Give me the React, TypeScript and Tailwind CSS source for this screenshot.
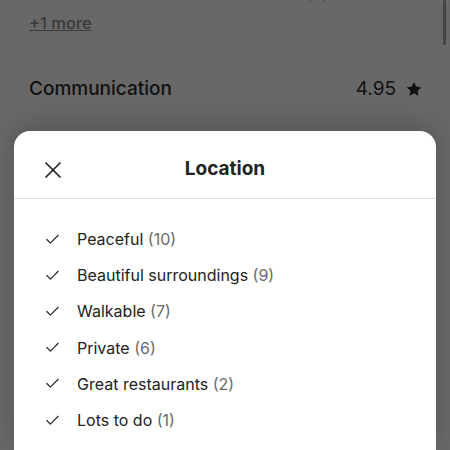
import { X, Check } from "lucide-react";

const TAGS = [
  { label: "Peaceful", count: 10 },
  { label: "Beautiful surroundings", count: 9 },
  { label: "Walkable", count: 7 },
  { label: "Private", count: 6 },
  { label: "Great restaurants", count: 2 },
  { label: "Lots to do", count: 1 },
];

function Star() {
  return (
    <svg width="14" height="14" viewBox="0 0 32 32" fill="currentColor" aria-hidden>
      <path d="M15.1 1.58l-4.13 8.88-9.86 1.27a1 1 0 0 0-.54 1.74l7.3 6.57-1.97 9.850a1 1 0 0 0 1.48 1.06l8.62-5 8.63 5a1 1 0 0 0 1.48-1.06l-1.97-9.85 7.3-6.57a1 1 0 0 0-.55-1.73l-9.86-1.28-4.12-8.88a1 1 0 0 0-1.82 0z" />
    </svg>
  );
}

export default function App() {
  return (
    <div className="relative w-[450px] h-[450px] overflow-hidden bg-[#686868] font-['Inter',sans-serif]">
      {/* page behind the sheet */}
      <div className="px-[29px]">
        <p className="-mt-[19px] pl-[20px] text-[16px] leading-6 text-[#262626]">
          Clean and comfortable bedrooms (3)
        </p>
        <button className="mt-[6px] text-[16.5px] leading-6 font-medium text-[#3a3a3a] underline">+1 more</button>
        <div className="mt-[42px] flex items-center justify-between">
          <span className="text-[19px] leading-6 font-medium text-[#111]">Communication</span>
          <span className="flex items-center gap-[11px] text-[19px] leading-6 text-[#111]">
            4.95
            <Star />
          </span>
        </div>
      </div>
      <div className="absolute right-[4px] top-0 h-[45px] w-[3px] rounded-full bg-[#444]" />

      {/* bottom sheet */}
      <div className="absolute left-[14px] right-[14px] top-[131px] bottom-0 rounded-t-[16px] bg-white shadow-[0_-6px_24px_rgba(0,0,0,0.18)]">
        <div className="relative flex h-[68px] items-center justify-center border-b border-[#dddddd] pt-[10px]">
          <button className="absolute left-[25px] top-[25px] text-[#222]">
            <X size={28} strokeWidth={1.5} />
          </button>
          <h2 className="text-[19px] font-bold text-[#222]">Location</h2>
        </div>
        <ul className="pt-[22px]">
          {TAGS.map((t) => (
            <li key={t.label} className="flex h-[36.2px] items-center pl-[30px]">
              <Check size={17} strokeWidth={1.6} className="text-[#222]" />
              <span className="ml-[16px] text-[16px] leading-6 text-[#222]">
                {t.label} <span className="text-[#6a6a6a]">({t.count})</span>
              </span>
            </li>
          ))}
        </ul>
      </div>
    </div>
  );
}
